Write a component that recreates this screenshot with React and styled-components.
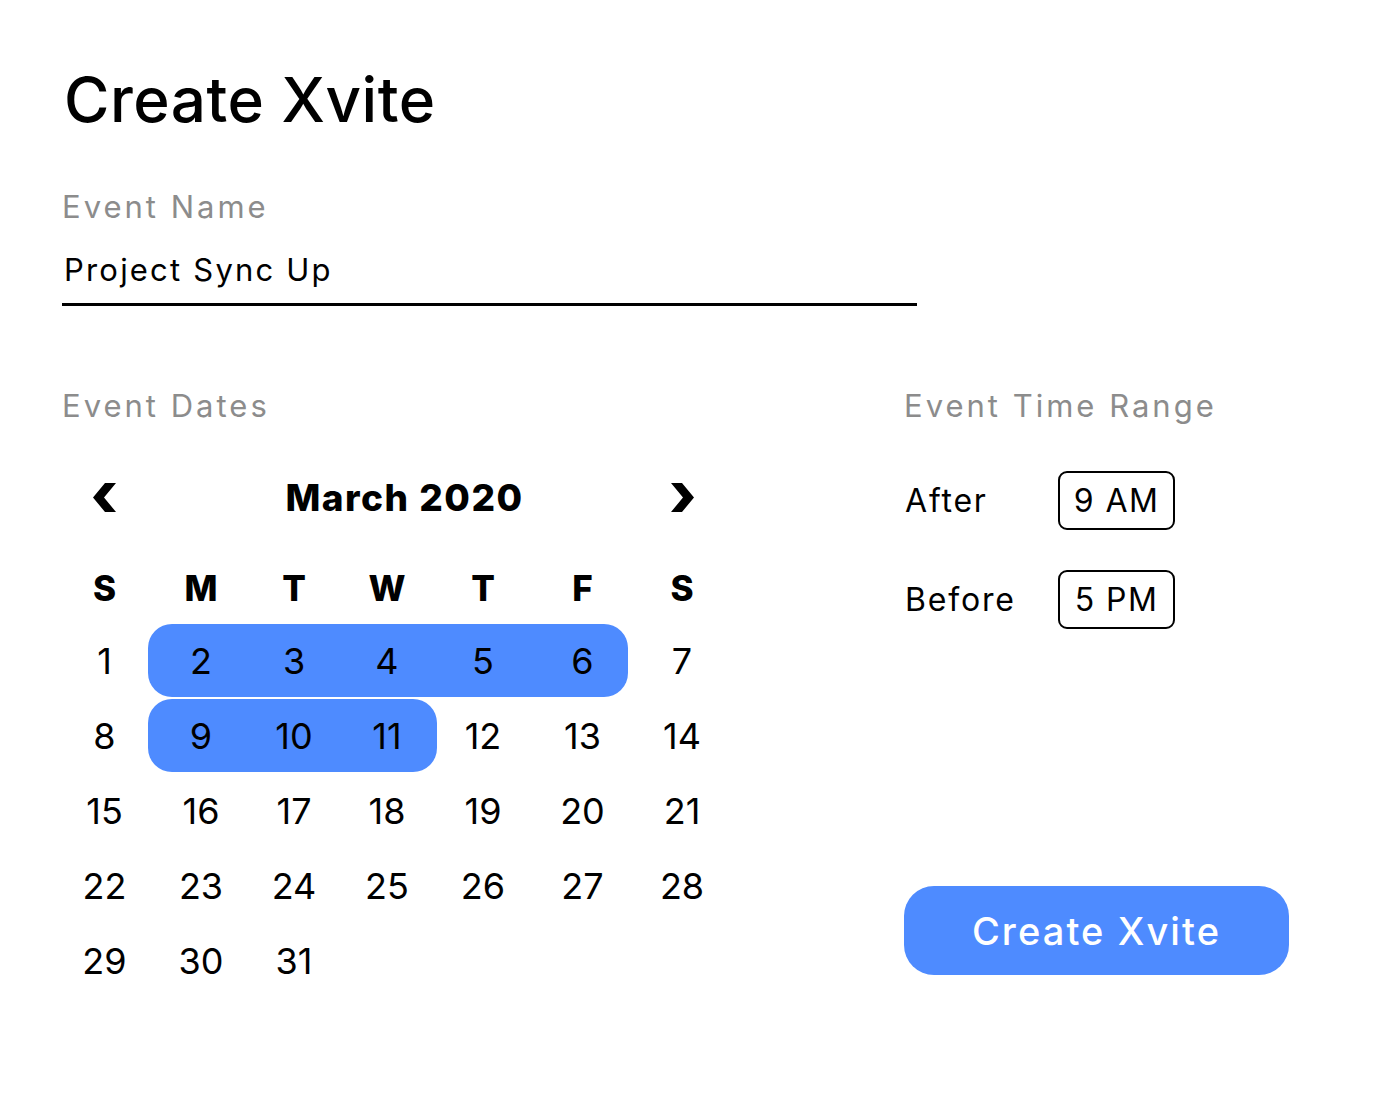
import React from 'react'
import styled, { createGlobalStyle } from 'styled-components'

const GlobalStyle = createGlobalStyle`
  body {
    margin: 0;
    background: #ffffff;
    font-family: Inter, 'Open Sans', 'Liberation Sans', sans-serif;
    color: #000000;
  }
`

const weeks = [
  [1, 2, 3, 4, 5, 6, 7],
  [8, 9, 10, 11, 12, 13, 14],
  [15, 16, 17, 18, 19, 20, 21],
  [22, 23, 24, 25, 26, 27, 28],
  [29, 30, 31],
]

// selected span per week: [first column, last column] (1-based)
const selected = {
  0: [2, 6],
  1: [2, 4],
}

const Page = styled.div`
  width: 1400px;
  height: 1100px;
  box-sizing: border-box;
  padding: 69px 0 0 62px;
`

const Title = styled.h1`
  margin: 0 0 0 2px;
  font-size: 62px;
  line-height: 62px;
  font-weight: 500;
  letter-spacing: 0.5px;
`

const Label = styled.div`
  margin-top: ${(p) => p.$top || 0}px;
  font-size: 31px;
  line-height: 40px;
  color: #8c8c8c;
  letter-spacing: 3px;
`

const NameInput = styled.div`
  margin-top: 23px;
  width: 853px;
  padding: 0 0 13px 2px;
  border-bottom: 3px solid #000;
  font-size: 31px;
  line-height: 40px;
  letter-spacing: 2.2px;
`

const Columns = styled.div`
  display: grid;
  grid-template-columns: 842px 1fr;
  margin-top: 80px;
`

const Calendar = styled.div`
  margin-left: -7px;
`

const Week = styled.div`
  display: grid;
  grid-template-columns: 99px 94px 92px 94px 98px 101px 98px;
  align-items: center;
  height: ${(p) => p.$h}px;
  margin-top: ${(p) => p.$top}px;
`

const Chevron = styled.button`
  grid-column: ${(p) => p.$col};
  justify-self: center;
  border: 0;
  padding: 0;
  background: none;
  display: flex;
  cursor: pointer;
`

const Month = styled.div`
  grid-column: 2 / 7;
  justify-self: center;
  padding-left: 22px;
  font-size: 37px;
  font-weight: 800;
  letter-spacing: 1.5px;
`

const DayName = styled.div`
  justify-self: center;
  font-size: 35px;
  font-weight: 800;
`

const Range = styled.div`
  grid-row: 1;
  grid-column: ${(p) => p.$from} / ${(p) => p.$to + 1};
  align-self: stretch;
  margin: 0 ${(p) => p.$right}px 0 -6px;
  background: #4e8bff;
  border-radius: 24px;
`

const Day = styled.div`
  grid-row: 1;
  grid-column: ${(p) => p.$col};
  justify-self: center;
  z-index: 1;
  font-size: 36px;
  font-weight: 400;
`

const TimePanel = styled.div`
  display: flex;
  flex-direction: column;
`

const TimeRow = styled.div`
  display: flex;
  align-items: center;
  margin-top: ${(p) => p.$top}px;
`

const TimeLabel = styled.div`
  width: 153px;
  padding-left: 1px;
  font-size: 32px;
  letter-spacing: 1.8px;
`

const TimeBox = styled.div`
  width: 117px;
  height: 59px;
  box-sizing: border-box;
  border: 2px solid #000;
  border-radius: 9px;
  display: flex;
  align-items: center;
  justify-content: center;
  font-size: 32px;
  letter-spacing: 1.4px;
`

const CreateButton = styled.button`
  margin-top: 257px;
  width: 385px;
  height: 89px;
  border: 0;
  border-radius: 30px;
  background: #4e8bff;
  color: #ffffff;
  font-family: inherit;
  font-size: 38px;
  font-weight: 500;
  letter-spacing: 2.1px;
  cursor: pointer;
`

function Arrow({ dir }) {
  const points =
    dir === 'left'
      ? '12,0 23,0 11,14.5 23,29 12,29 0,14.5'
      : '0,0 11,0 23,14.5 11,29 0,29 12,14.5'
  return (
    <svg width="23" height="29" viewBox="0 0 23 29">
      <polygon points={points} fill="#000" />
    </svg>
  )
}

function App() {
  return (
    <React.Fragment>
      <GlobalStyle />
      <Page>
        <Title>Create Xvite</Title>
        <Label $top={56}>Event Name</Label>
        <NameInput>Project Sync Up</NameInput>

        <Columns>
          <div>
            <Label>Event Dates</Label>
            <Calendar>
              <Week $h={50} $top={46}>
                <Chevron $col={1} aria-label="Previous month">
                  <Arrow dir="left" />
                </Chevron>
                <Month>March 2020</Month>
                <Chevron $col={7} aria-label="Next month">
                  <Arrow dir="right" />
                </Chevron>
              </Week>
              <Week $h={50} $top={41}>
                {['S', 'M', 'T', 'W', 'T', 'F', 'S'].map((d, i) => (
                  <DayName key={i}>{d}</DayName>
                ))}
              </Week>
              {weeks.map((week, w) => (
                <Week key={w} $h={73} $top={w === 0 ? 11 : 2}>
                  {selected[w] && (
                    <Range
                      $from={selected[w][0]}
                      $to={selected[w][1]}
                      $right={w === 0 ? 5 : -3}
                    />
                  )}
                  {week.map((n, i) => (
                    <Day key={n} $col={i + 1}>
                      {n}
                    </Day>
                  ))}
                </Week>
              ))}
            </Calendar>
          </div>

          <TimePanel>
            <Label>Event Time Range</Label>
            <TimeRow $top={45}>
              <TimeLabel>After</TimeLabel>
              <TimeBox>9 AM</TimeBox>
            </TimeRow>
            <TimeRow $top={40}>
              <TimeLabel>Before</TimeLabel>
              <TimeBox>5 PM</TimeBox>
            </TimeRow>
            <div>
              <CreateButton>Create Xvite</CreateButton>
            </div>
          </TimePanel>
        </Columns>
      </Page>
    </React.Fragment>
  )
}

export default App
